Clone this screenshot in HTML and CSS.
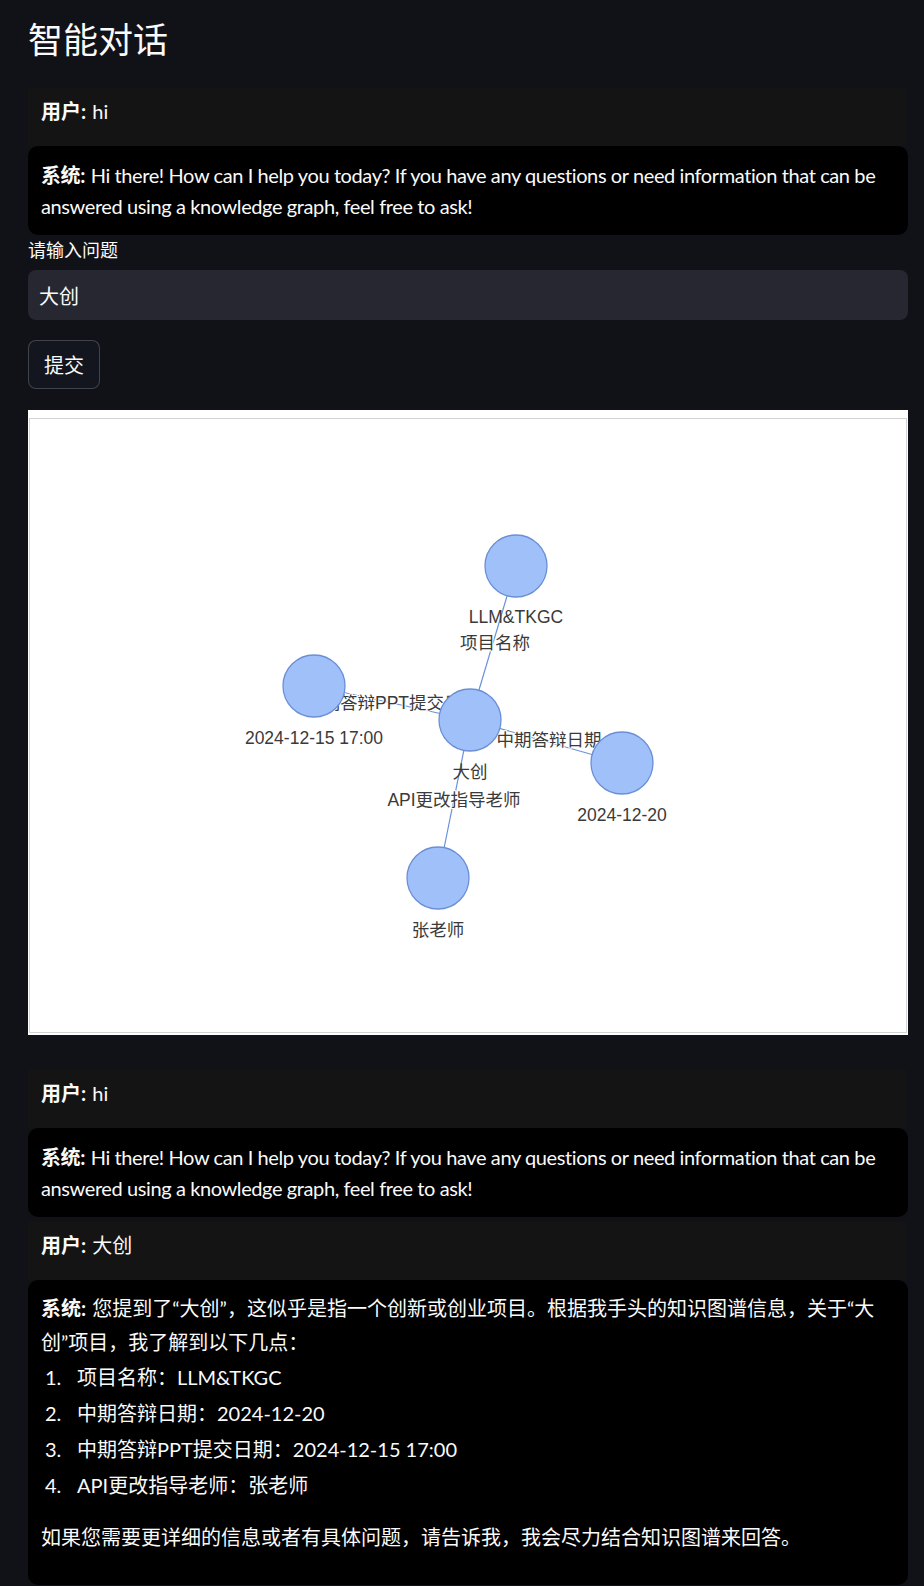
FILE: index.html
```
<!DOCTYPE html>
<html lang="zh-CN">
<head>
<meta charset="utf-8">
<title>智能对话</title>
<link rel="stylesheet" href="styles.css">
</head>
<body>
<main class="app">
  <h1 class="title">智能对话</h1>

  <section class="history">
    <div class="msg-user"><b>用户:</b> hi</div>
    <div class="msg-sys"><p class="en"><b>系统:</b> Hi there! How can I help you today? If you have any questions or need information that can be answered using a knowledge graph, feel free to ask!</p></div>
  </section>

  <label class="field-label" for="q">请输入问题</label>
  <input id="q" class="text-input" type="text" value="大创">
  <button class="btn" type="button">提交</button>

  <div class="graph-frame">
    <div class="graph-card">
      <svg class="graph" viewBox="0 0 876 613" xmlns="http://www.w3.org/2000/svg">
        <g class="edges">
          <line x1="440" y1="301" x2="486" y2="147"/>
          <line x1="440" y1="301" x2="284" y2="267"/>
          <line x1="440" y1="301" x2="592" y2="344"/>
          <line x1="440" y1="301" x2="408" y2="459"/>
        </g>
        <g class="edge-labels">
          <text x="465" y="230">项目名称</text>
          <text x="362" y="290">中期答辩PPT提交日期</text>
          <text x="519" y="327">中期答辩日期</text>
          <text x="424" y="387">API更改指导老师</text>
        </g>
        <g class="nodes">
          <circle cx="486" cy="147" r="31"/>
          <circle cx="284" cy="267" r="31"/>
          <circle cx="440" cy="301" r="31"/>
          <circle cx="592" cy="344" r="31"/>
          <circle cx="408" cy="459" r="31"/>
        </g>
        <g class="node-labels">
          <text x="486" y="204">LLM&amp;TKGC</text>
          <text x="284" y="325">2024-12-15 17:00</text>
          <text x="440" y="359">大创</text>
          <text x="592" y="402">2024-12-20</text>
          <text x="408" y="517">张老师</text>
        </g>
      </svg>
    </div>
  </div>

  <section class="history history-lower">
    <div class="msg-user"><b>用户:</b> hi</div>
    <div class="msg-sys"><p class="en"><b>系统:</b> Hi there! How can I help you today? If you have any questions or need information that can be answered using a knowledge graph, feel free to ask!</p></div>
    <div class="msg-user msg-user-next"><b>用户:</b> 大创</div>
    <div class="msg-sys msg-long">
      <p class="zh"><b>系统:</b> 您提到了“大创”，这似乎是指一个创新或创业项目。根据我手头的知识图谱信息，关于“大<br>创”项目，我了解到以下几点：</p>
      <ol class="facts">
        <li><span class="num">1.</span>项目名称：LLM&amp;TKGC</li>
        <li><span class="num">2.</span>中期答辩日期：2024-12-20</li>
        <li><span class="num">3.</span>中期答辩PPT提交日期：2024-12-15 17:00</li>
        <li><span class="num">4.</span>API更改指导老师：张老师</li>
      </ol>
      <p class="zh closing">如果您需要更详细的信息或者有具体问题，请告诉我，我会尽力结合知识图谱来回答。</p>
    </div>
  </section>
</main>
</body>
</html>
```
FILE: styles.css
```
html, body {
  margin: 0;
  background: #111218;
}

.app {
  padding: 21px 16px 40px 28px;
  font-family: "Lato", "Noto Sans CJK SC", sans-serif;
  font-size: 20px;
  color: #fafafa;
}

.title {
  margin: 0 0 25px;
  font-family: "Liberation Serif", "Noto Sans CJK SC", serif;
  font-weight: 400;
  font-size: 35px;
  line-height: 42px;
}

.history {
  display: flex;
  flex-direction: column;
}

.history-lower {
  margin-top: 35px;
}

.msg-user {
  background: #141414;
  margin-right: 2px;
  padding: 10px 13px 22px;
  line-height: 26px;
}

.msg-user-next {
  margin-top: 5px;
}

.msg-user b,
.msg-sys b {
  font-weight: 700;
  margin-right: 1px;
}

.msg-sys {
  background: #000000;
  border-radius: 10px;
  padding: 14px 13px 13px;
}

.msg-sys p {
  margin: 0;
}

.msg-sys .en {
  line-height: 31px;
  letter-spacing: -0.4px;
}

.msg-long {
  padding: 11px 13px 31px;
}

.msg-sys .zh {
  line-height: 34px;
}

.facts {
  list-style: none;
  margin: 0;
  padding: 0 0 0 4px;
}

.facts li {
  display: flex;
  line-height: 36px;
}

.facts .num {
  flex: 0 0 32px;
}

.msg-sys .closing {
  margin-top: 17px;
}

.field-label {
  display: block;
  margin-top: 4px;
  font-size: 18px;
  line-height: 22px;
}

.text-input {
  display: block;
  box-sizing: border-box;
  width: 100%;
  height: 50px;
  margin-top: 9px;
  padding: 0 11px;
  border: none;
  border-radius: 8px;
  background: #262730;
  color: #fafafa;
  font-family: "Lato", "Noto Sans CJK SC", sans-serif;
  font-size: 20px;
  outline: none;
}

.btn {
  display: block;
  box-sizing: border-box;
  width: 72px;
  height: 49px;
  margin-top: 20px;
  padding: 0;
  border: 1px solid rgba(250, 250, 250, 0.2);
  border-radius: 8px;
  background: #13161f;
  color: #fafafa;
  font-family: "Noto Sans CJK SC", sans-serif;
  font-size: 20px;
}

.graph-frame {
  margin-top: 21px;
  background: #ffffff;
  padding: 8px 1px 2px;
}

.graph-card {
  border: 1px solid #d3d3d3;
  height: 613px;
}

.graph {
  display: block;
  width: 876px;
  height: 613px;
}

.graph .edges line {
  stroke: #6b90d8;
  stroke-width: 1.2;
}

.graph text {
  font-family: "Liberation Sans", "Noto Sans CJK SC", sans-serif;
  font-size: 17.5px;
  fill: #3a3a3a;
  text-anchor: middle;
}

.graph .edge-labels text {
  stroke: #ffffff;
  stroke-width: 2px;
  paint-order: stroke;
}

.graph .nodes circle {
  fill: #a0c0fa;
  stroke: #6b8fd6;
  stroke-width: 1.3;
}
```
